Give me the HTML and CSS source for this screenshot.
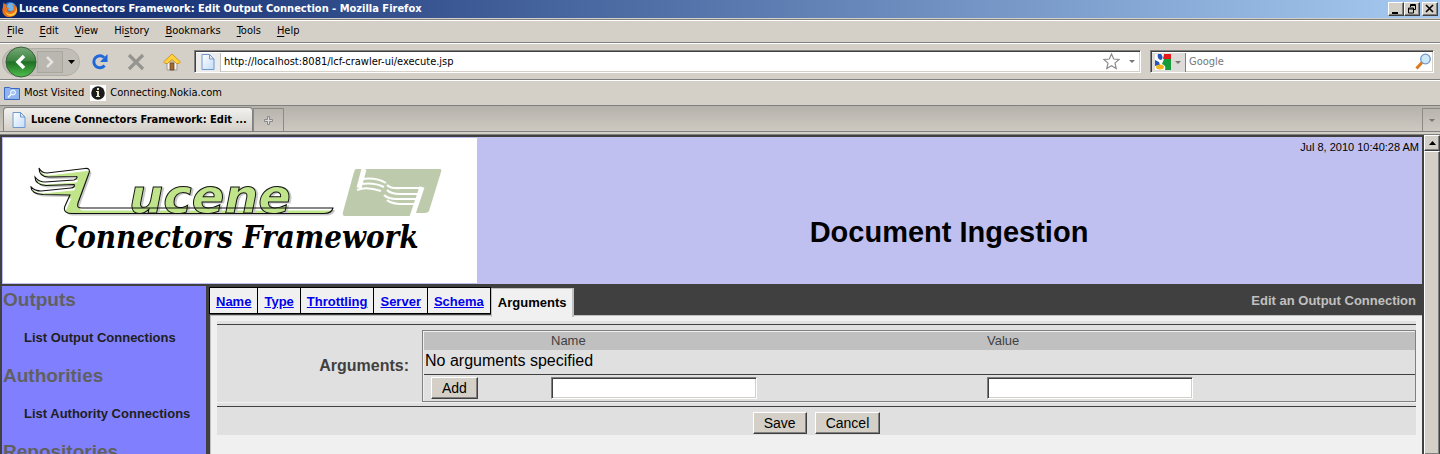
FILE: index.html
```html
<!DOCTYPE html>
<html lang="en">
<head>
<meta charset="utf-8">
<title>Lucene Connectors Framework: Edit Output Connection</title>
<link rel="stylesheet" href="styles.css">
</head>
<body>
<div class="window">
  <header class="titlebar">
    <svg class="fox" viewBox="0 0 16 16" aria-hidden="true"><circle cx="8" cy="8" r="7" fill="#2f6fc0"/><circle cx="9" cy="6" r="4" fill="#6fb4ea"/><path d="M2 1c0 2 1 2 3 3L4 6c2 0 3 1 3 2-1 0-2 0-2 1 1 2 4 2 6 0 1-2 0-4-1-6 4 1 6 5 5 8-1 3-4 5-8 5C2 16-1 11 1 6c0-2 0-3 1-5z" fill="#e8731a"/><path d="M14 5c1 5-2 8-6 8-2 0-4-1-5-3 1 4 4 5 6 5 5 0 7-5 5-10z" fill="#ffc43a"/></svg>
    <h1 class="window-title">Lucene Connectors Framework: Edit Output Connection - Mozilla Firefox</h1>
    <div class="window-buttons">
      <button class="wbtn" aria-label="Minimize"><svg viewBox="0 0 12 10"><path d="M2 8h6v2H2z"/></svg></button>
      <button class="wbtn" aria-label="Restore"><svg viewBox="0 0 12 10"><path d="M4.500 3V.5h5v5H7M4 1.500h6" fill="none" stroke="#000"/><path d="M2.500 4h5v5h-5zM2 5h6" fill="#d4d0c8" stroke="#000"/></svg></button>
      <button class="wbtn wbtn-close" aria-label="Close"><svg viewBox="0 0 12 10"><path d="M2 1l7 7M9 1L2 8" fill="none" stroke="#000" stroke-width="1.600"/></svg></button>
    </div>
  </header>

  <nav class="menubar" aria-label="Menu">
    <button><u>F</u>ile</button><button><u>E</u>dit</button><button><u>V</u>iew</button><button>Hi<u>s</u>tory</button><button><u>B</u>ookmarks</button><button><u>T</u>ools</button><button><u>H</u>elp</button>
  </nav>

  <div class="toolbar">
    <div class="history">
      <button class="back" aria-label="Back"><svg viewBox="0 0 32 32"><defs><linearGradient id="gb" x1="0" y1="0" x2="0" y2="1"><stop offset="0" stop-color="#78a878"/><stop offset=".45" stop-color="#3d8540"/><stop offset=".5" stop-color="#1f6f24"/><stop offset="1" stop-color="#4fc04c"/></linearGradient></defs><circle cx="16" cy="16" r="15" fill="url(#gb)" stroke="#3b5f3b"/><path d="M19 10l-6 6 6 6" fill="none" stroke="#fff" stroke-width="3.500"/></svg></button>
      <button class="forward" aria-label="Forward"><svg viewBox="0 0 10 12"><path d="M2 1l5 5-5 5" fill="none" stroke="#e6e4e0" stroke-width="2.500"/></svg></button>
      <button class="drop" aria-label="Recent pages"><svg viewBox="0 0 7 4"><path d="M0 0h7L3.500 4z"/></svg></button>
    </div>
    <button class="tool" aria-label="Reload"><svg viewBox="0 0 18 18"><path d="M13.500 12.500A6 6 0 1 1 13 4.500" fill="none" stroke="#1f68d8" stroke-width="3"/><path d="M16.500 1v8H9z" fill="#1f68d8"/></svg></button>
    <button class="tool" aria-label="Stop"><svg viewBox="0 0 18 18"><path d="M2 2l14 14M16 2L2 16" stroke="#96948f" stroke-width="3.200"/></svg></button>
    <button class="tool" aria-label="Home"><svg viewBox="0 0 18 18"><path d="M4 9h10v8H4z" fill="#f6f4f0" stroke="#999"/><path d="M7 10h4v7H7z" fill="#a46a34" stroke="#5f3c18" stroke-width=".7"/><path d="M9 1l8.500 8-1.500 1.500h-2.500L9 6.500 4.500 10.500H2L.500 9z" fill="#fdd23c" stroke="#cf8f16" stroke-width=".9"/></svg></button>
    <div class="field urlbar">
      <span class="site"><svg class="page-icon" viewBox="0 0 14 16"><use href="#page"/></svg></span>
      <input class="url" aria-label="Location" value="http://localhost:8081/lcf-crawler-ui/execute.jsp">
      <button class="plain" aria-label="Bookmark this page"><svg class="star" viewBox="0 0 17 17"><path d="M8.500 1l2.200 5 5.300.5-4 3.600 1.200 5.400-4.700-2.800-4.700 2.800L5 10.100 1 6.500 6.300 6z" fill="#fff" stroke="#8c8c8c" stroke-width="1.200"/></svg></button>
      <button class="plain arrow-gap" aria-label="Show history"><svg class="arrow" viewBox="0 0 6 3"><path d="M0 0h6L3 3z" fill="#777"/></svg></button>
    </div>
    <div class="field search">
      <button class="engine" aria-label="Search engine"><svg class="g" viewBox="0 0 16 16"><path fill="#fff" d="M0 0h16v16H0z"/><path fill="#e3191b" d="M9 0h7v5H8z"/><path fill="#169b3a" d="M9 5h7v11h-6c1-3 0-5-3-6z"/><path fill="#2555b8" d="M0 6l4 2 1 3-5 1z"/><path fill="#2555b8" d="M3 0h3c2 2 2 5 0 6-3 0-4-4-3-6z"/><ellipse cx="5" cy="13" rx="4" ry="2.500" fill="#f6b51b"/></svg><svg class="arrow" viewBox="0 0 6 3"><path d="M0 0h6L3 3z" fill="#777"/></svg></button>
      <input class="query" aria-label="Search" placeholder="Google">
      <button class="plain" aria-label="Go"><svg class="lens" viewBox="0 0 16 17"><path d="M1.500 15.500L7 9.500" stroke="#d97a22" stroke-width="3"/><circle cx="10.500" cy="6" r="4.800" fill="#cdeafb" stroke="#7497c9" stroke-width="1.300"/></svg></button>
    </div>
  </div>

  <nav class="bookmarks" aria-label="Bookmarks">
    <a href="#visited"><svg viewBox="0 0 16 14"><path d="M.5 1.500h5l1.500 1h8.500v11H.5z" fill="#8fb4ee" stroke="#3c69bd"/><circle cx="9" cy="6.500" r="2.500" fill="#a9c8f5" stroke="#fff"/><path d="M7 8.500l-3 3" stroke="#fff" stroke-width="1.500"/></svg>Most Visited</a>
    <a href="#nokia"><svg viewBox="0 0 16 16"><path fill="#fff" d="M0 0h16v16H0z"/><circle cx="8" cy="8" r="6.800" fill="#1b1b1b"/><path d="M7 3h2v2H7zM6 6h3v5h1v1H6v-1h1V7H6z" fill="#e9e5c8"/></svg>Connecting.Nokia.com</a>
  </nav>

  <div class="tabstrip">
    <button class="btab"><svg class="page-icon" viewBox="0 0 14 16"><defs><linearGradient id="pg" x1="0" y1="0" x2="1" y2="1"><stop offset="0" stop-color="#fff"/><stop offset="1" stop-color="#c3dcfa"/></linearGradient><path id="page" d="M1 .5h7.500L13 5v10.500H1zM8.500.5V5H13" fill="url(#pg)" stroke="#6f98cf"/></defs><use href="#page"/></svg>Lucene Connectors Framework: Edit ...</button>
    <button class="newtab" aria-label="New tab"><svg viewBox="0 0 9 9"><path d="M3.500.5h2v3h3v2h-3v3h-2v-3h-3v-2h3z" fill="#ddd" stroke="#888"/></svg></button>
    <button class="alltabs" aria-label="List all tabs"><svg class="arrow" viewBox="0 0 6 3"><path d="M0 0h6L3 3z" fill="#777"/></svg></button>
  </div>

  <div class="viewport">
    <div class="page">
      <header class="banner">
        <div class="logo">
          <svg viewBox="0 0 474 145" role="img" aria-label="Lucene Connectors Framework">
            <defs>
              <path id="wing" d="M36 30C38 34 40 35 44 35L82 30.500C86 30 87 32 86 35L75 65C74 69 75 70 79 70H330C329 74 326 75.500 321 75.500H71C63 76 60 73 62 68L67 57L40 56.500C33 56 28 54 28 49C31 52 34 53 38 53L68 50C71 50 72 47.500 71 46.500L43 47.500C36 47 32 44 32 39C35 43 38 44 42 44L71 42C74 41 75 38 73 38.500L46 39C40 39 36 36 36 30Z"/>
              <clipPath id="wing-clip"><use href="#wing"/></clipPath>
            </defs>
            <use href="#wing" fill="#c8c8c8" transform="translate(2 2)"/>
            <use href="#wing" fill="#fff"/>
            <g clip-path="url(#wing-clip)"><use href="#wing" fill="#bfe48a" stroke="#bfe48a" transform="translate(2 3)"/><path d="M70 56l8-22h7L74 70z" fill="#bfe48a"/></g>
            <text class="wordmark" x="126" y="75">ucene</text>
            <use href="#wing" fill="none" stroke="#111" stroke-width="1.100"/>
            <path d="M353 31H437Q439 31 438 34L426 73Q425 75 422 75H413Q411 75 410 78H342Q339 78 340 74L351 34Q352 31 353 31Z" fill="#bdcaac"/>
            <g fill="none" stroke="#fff">
              <path d="M361 31L356 50" stroke-width="5"/>
              <path d="M359 41Q373 39 383 45M358 46Q371 44 381 49M354 52Q363 48 378 53" stroke-width="2"/>
              <path d="M420 50H398Q388 51 384 47M418 56H397Q388 56 384 52M416 61H394Q385 61 381 57M414 66H396Q387 65 384 62" stroke-width="2.200"/>
              <path d="M419 49L409 79" stroke-width="5"/>
            </g>
            <text class="subtitle" x="52" y="110">Connectors Framework</text>
          </svg>
        </div>
        <div class="banner-text">
          <div class="date">Jul 8, 2010 10:40:28 AM</div>
          <h2 class="page-title">Document Ingestion</h2>
        </div>
      </header>

      <div class="columns">
        <nav class="sidebar" aria-label="Navigation">
          <h3>Outputs</h3>
          <a href="#outputs">List Output Connections</a>
          <h3>Authorities</h3>
          <a href="#authorities">List Authority Connections</a>
          <h3>Repositories</h3>
        </nav>
        <main class="main">
          <div class="tabs">
            <a class="tab" href="#name">Name</a>
            <a class="tab" href="#type">Type</a>
            <a class="tab" href="#throttling">Throttling</a>
            <a class="tab" href="#server">Server</a>
            <a class="tab" href="#schema">Schema</a>
            <span class="tab tab-active">Arguments</span>
            <span class="action">Edit an Output Connection</span>
          </div>
          <form class="editor">
            <div class="row">
              <div class="row-label">Arguments:</div>
              <table class="args">
                <thead><tr><th class="col-add"></th><th class="col-name">Name</th><th>Value</th></tr></thead>
                <tbody>
                  <tr><td class="empty" colspan="3">No arguments specified</td></tr>
                  <tr class="entry"><td class="add-cell"><button type="button" class="btn">Add</button></td><td><input class="box" aria-label="Name"></td><td><input class="box" aria-label="Value"></td></tr>
                </tbody>
              </table>
            </div>
            <div class="actions"><button type="button" class="btn">Save</button><button type="button" class="btn">Cancel</button></div>
          </form>
        </main>
      </div>
    </div>
    <div class="scrollbar" aria-hidden="true"><span class="scroll-up"><svg viewBox="0 0 7 4"><path d="M0 4h7L3.500 0z"/></svg></span><span class="thumb"></span></div>
  </div>
</div>
</body>
</html>
```
FILE: styles.css
```css
* { box-sizing: border-box; }
body { margin: 0; background: #d4d0c8; font-family: "Liberation Sans", Arial, sans-serif; }
button { margin: 0; padding: 0; border: 0; background: none; color: #000; font: inherit; }
svg { display: block; flex: none; }
a { color: inherit; text-decoration: none; }

.window { display: flex; flex-direction: column; height: 100vh; overflow: hidden; }
.titlebar, .menubar, .toolbar, .bookmarks, .tabstrip { flex: none; display: flex; align-items: center; font: 11px/14px "DejaVu Sans Condensed", "DejaVu Sans", sans-serif; }

.titlebar { height: 18px; padding: 0 2px; background: linear-gradient(90deg, #0a246a, #a6caf0); }
.fox { width: 16px; height: 16px; }
.window-title { margin: 0 auto 0 1px; color: #fff; font-size: 11px; line-height: 16px; white-space: nowrap; }
.window-buttons { display: flex; }
.wbtn { width: 16px; height: 14px; padding: 1px; background: #d4d0c8; border: 1px solid; border-color: #fff #404040 #404040 #fff; box-shadow: inset -1px -1px #808080; }
.wbtn svg { width: 12px; height: 10px; }
.wbtn-close { margin-left: 2px; }

.menubar { height: 24px; margin-top: 1px; padding: 0 7px; gap: 16px; border-top: 1px solid #808080; border-bottom: 1px solid #808080; box-shadow: inset 0 1px #fff; }
.menubar u { text-underline-offset: 2px; }

.toolbar { height: 37px; padding: 0 6px 0 2px; border-top: 1px solid #fff; border-bottom: 1px solid #808080; }
.history { display: flex; align-items: center; height: 28px; width: 78px; background: #c1beb7; border: 1px solid #b0ada6; border-radius: 14px; }
.back, .back svg { width: 32px; height: 32px; }
.back { margin-left: 2px; }
.forward { display: flex; align-items: center; justify-content: center; width: 26px; height: 22px; background: #bab7b0; border: 1px solid #aaa79f; }
.forward svg { width: 10px; height: 12px; }
.drop { margin-left: 5px; }
.drop svg { width: 7px; height: 4px; }
.tool { margin-left: 18px; }
.history + .tool { margin-left: 11px; }
.tool svg { width: 18px; height: 18px; }
.field { display: flex; align-items: center; height: 23px; background: #fff; border: 1px solid; border-color: #808080 #fff #fff #808080; box-shadow: inset 1px 1px #404040, inset -1px -1px #d4d0c8; }
.urlbar { flex: 1; margin-left: 13px; padding-right: 5px; }
.site { display: flex; align-items: center; justify-content: center; width: 25px; height: 19px; margin: 1px 0 0 1px; background: #ececec; border-right: 1px solid #c0c0c0; }
.page-icon { width: 14px; height: 16px; }
.url, .query { flex: 1; min-width: 0; padding: 0 3px; border: 0; outline: 0; background: none; color: #000; font: inherit; }
.query::placeholder { color: #777; opacity: 1; }
.plain { flex: none; }
.star { width: 17px; height: 17px; }
.arrow { width: 6px; height: 3px; }
.arrow-gap { margin-left: 9px; }
.search { width: 284px; margin-left: 9px; padding-right: 2px; }
.engine { display: flex; align-items: center; gap: 4px; height: 19px; margin: 1px 0 0 1px; padding: 0 4px 0 3px; background: #dedcd8; border-right: 1px solid #808080; }
.g { width: 16px; height: 16px; }
.lens { width: 16px; height: 17px; }

.bookmarks { height: 26px; padding: 0 4px; gap: 6px; border-top: 1px solid #fff; border-bottom: 1px solid #808080; }
.bookmarks a { display: flex; align-items: center; gap: 4px; }
.bookmarks svg { width: 16px; height: 16px; }

.tabstrip { height: 26px; align-items: flex-end; background: linear-gradient(#b5b2ab, #cdc9c1); border-bottom: 1px solid #808080; }
.btab { display: flex; align-items: center; gap: 5px; width: 250px; height: 24px; margin-left: 3px; padding: 0 8px; background: linear-gradient(#f2f1ef, #d4d0c8); border: 1px solid #808080; border-bottom: 0; border-radius: 4px 4px 0 0; font-weight: bold; white-space: nowrap; }
.newtab, .alltabs { display: flex; align-items: center; justify-content: center; height: 23px; border: 1px solid #8c8a85; border-bottom: 0; }
.newtab { width: 31px; }
.newtab svg { width: 9px; height: 9px; }
.alltabs { width: 18px; margin-left: auto; border-right: 0; }

.viewport { flex: 1; min-height: 0; display: flex; margin-top: 2px; border-top: 1px solid #808080; overflow: hidden; }
.page { flex: 1; display: flex; flex-direction: column; padding: 2px 2px 0; background: #404040; overflow: hidden; }
.banner { flex: none; display: flex; padding: 1px; background: #c0c0f0; }
.logo { width: 474px; background: #fff; }
.logo svg { width: 474px; height: 145px; }
.wordmark { font: italic bold 48px "DejaVu Sans", sans-serif; fill: #bfe48a; stroke: #111; stroke-width: 1px; filter: drop-shadow(2px 1px 0 #c8c8c8); }
.subtitle { font: italic bold 31px "DejaVu Serif Condensed", "DejaVu Serif", serif; }
.banner-text { flex: 1; padding: 2px 2px 0; }
.date { font-size: 11px; line-height: 14px; text-align: right; }
.page-title { margin: 60px 0 0; font-size: 29px; line-height: 36px; text-align: center; }

.columns { flex: 1; display: flex; gap: 3px; padding-top: 2px; }
.sidebar { flex: none; width: 204px; padding-top: 1px; background: #8080ff; }
.sidebar h3 { margin: 0; padding-left: 1px; font-size: 19px; line-height: 26px; color: #606060; }
.sidebar a { display: block; margin: 17px 0 17px 22px; font-size: 13px; line-height: 16px; font-weight: bold; color: #202020; }
.main { flex: 1; display: flex; flex-direction: column; min-width: 0; }
.tabs { display: flex; height: 29px; padding-top: 1px; font-size: 13px; line-height: 27px; font-weight: bold; }
.tab { height: 27px; padding: 0 6px; background: #f0f0f0; border: 1px solid #000; border-left: 0; color: #0000ee; text-decoration: underline; }
.tab:first-child { border-left: 1px solid #000; }
.tab-active { position: relative; height: 29px; margin-top: 1px; border: 0; border-top: 1px solid #c0c0c0; border-right: 2px solid #c0c0c0; border-left: 1px solid #c0c0c0; color: #000; text-decoration: none; }
.action { margin-left: auto; padding-right: 6px; color: #c0c0c0; }

.editor { flex: 1; display: flex; flex-direction: column; margin-left: 1px; padding: 5px 6px 0 6px; background: #f0f0f0; border: 1px solid #c0c0c0; border-bottom: 0; border-right: 0; }
.row { display: flex; padding-top: 5px; background: linear-gradient(#404040, #404040) 0 3px / 100% 1px no-repeat #e0e0e0; }
.row-label { display: flex; align-items: center; justify-content: flex-end; width: 205px; padding: 4px 13px 0 0; font-size: 16px; font-weight: bold; color: #404040; }
.args { flex: 1; margin-top: 4px; border: 1px solid #808080; box-shadow: inset 1px 1px #f0f0f0, 0 1px #f0f0f0; border-spacing: 0; padding: 1px 0 0 1px; table-layout: fixed; }
.args th { height: 18px; padding: 0; background: #c0c0c0; color: #404040; font-size: 13px; font-weight: normal; line-height: 18px; text-align: left; }
.col-add { width: 127px; }
.col-name { width: 44%; }
.args td { padding: 0; }
.args .empty { height: 25px; padding: 0 1px 3px; border-bottom: 1px solid #404040; font-size: 16px; line-height: 18px; }
.entry { height: 26px; }
.args .add-cell { padding-left: 7px; }
.btn { display: block; height: 22px; padding: 0 10px; background: #d4d0c8; border: 1px solid; border-color: #fff #404040 #404040 #fff; box-shadow: inset -1px -1px #808080; font-size: 14px; line-height: 18px; }
.box { display: block; width: 206px; height: 22px; padding: 0 3px; background: #fff; border: 1px solid; border-color: #808080 #fff #fff #808080; box-shadow: inset 1px 1px #404040, inset -1px -1px #d4d0c8; }
.actions { display: flex; justify-content: center; gap: 8px; margin-top: 1px; padding: 9px 0 1px; background: linear-gradient(#404040, #404040) 0 3px / 100% 1px no-repeat #e0e0e0; }

.scrollbar { flex: none; display: flex; flex-direction: column; width: 16px; background: #e9e7e3; }
.scroll-up, .thumb { background: #d4d0c8; border: 1px solid; border-color: #fff #404040 #404040 #fff; box-shadow: inset -1px -1px #808080; }
.scroll-up { display: flex; align-items: center; justify-content: center; height: 16px; }
.scroll-up svg { width: 7px; height: 4px; }
.thumb { flex: 1; border-bottom: 0; }
```
